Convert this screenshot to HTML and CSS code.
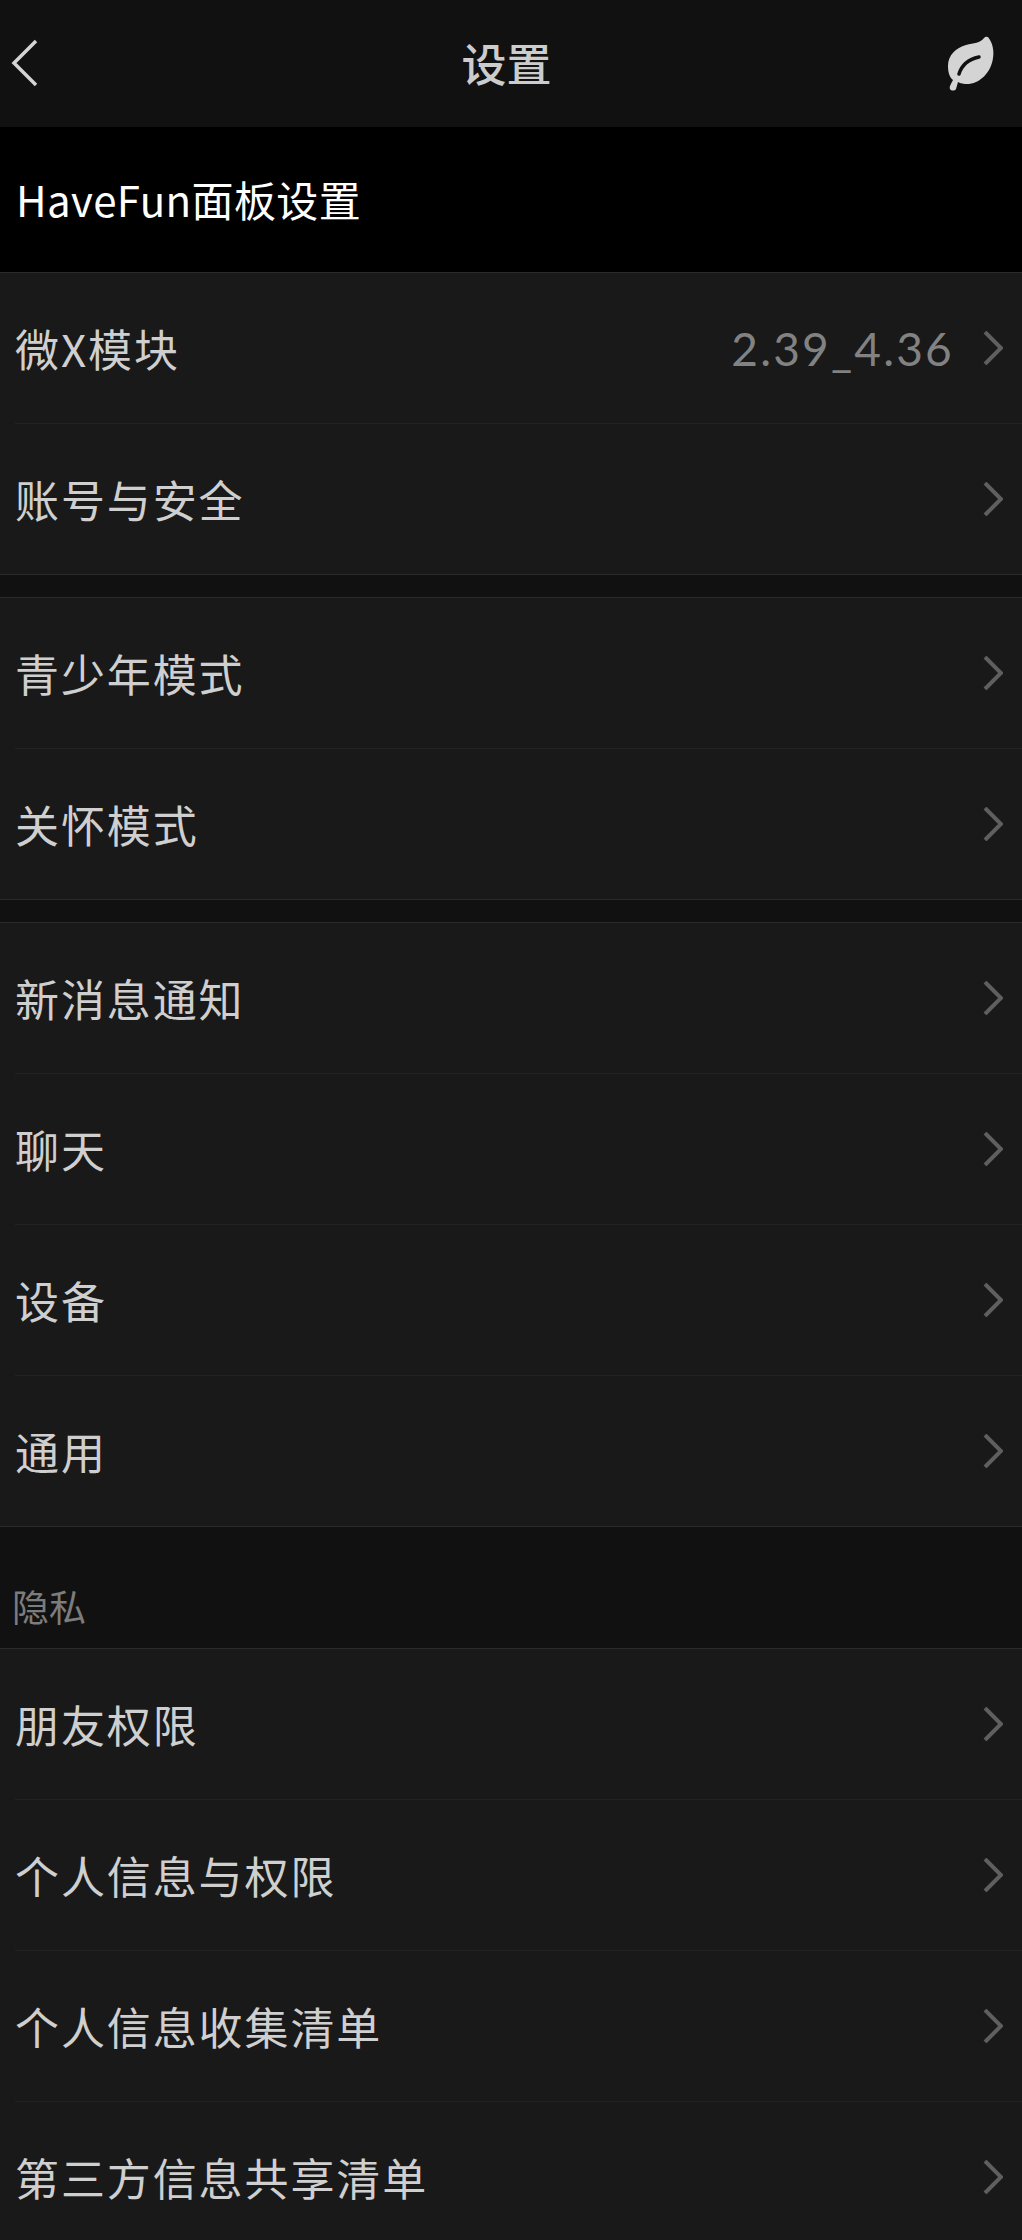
FILE: index.html
```html
<!DOCTYPE html>
<html lang="zh-CN">
<head>
    <meta charset="UTF-8">
    <title>设置</title>
    <link rel="stylesheet" href="styles.css">
</head>
<body>
    <!-- Top bar -->
    <div class="nav-bar">
        <svg class="nav-back" width="28" height="48" viewBox="0 0 28 48"><path d="M25 2 L3 24 L25 46" fill="none" stroke="#d4d4d4" stroke-width="3.5"/></svg>
        <div class="nav-title">设置</div>
        <svg class="nav-leaf" width="48" height="56" viewBox="0 0 48 56">
            <path d="M38 3 C41 0 43 3 44 5 C47 10 48 17 47 23 C45 38 33 50 19 49 C17 49 15 48 14 48 L12 47 L10 54 C9 56 5 56 4 54 C3 52 5 49 7 45 C3 42 2 36 2 31 C2 20 10 13 20 10 C28 8 34 8 38 3 Z" fill="#d4d4d4"/>
            <path d="M13 39 C16 29 24 24 33 22" fill="none" stroke="#111" stroke-width="3.5" stroke-linecap="round"/>
        </svg>
    </div>

    <div class="banner">HaveFun面板设置</div>

    <div class="group">
        <div class="row">
            <span class="row-label">微X模块</span>
            <span class="row-value">2.39_4.36</span>
            <svg class="chevron" width="20" height="34" viewBox="0 0 20 34"><path d="M2 1 L18 17 L2 33" fill="none" stroke="#5f5f5f" stroke-width="4"/></svg>
        </div>
        <div class="row">
            <span class="row-label">账号与安全</span>
            <svg class="chevron" width="20" height="34" viewBox="0 0 20 34"><path d="M2 1 L18 17 L2 33" fill="none" stroke="#5f5f5f" stroke-width="4"/></svg>
        </div>
    </div>

    <div class="group spaced">
        <div class="row">
            <span class="row-label">青少年模式</span>
            <svg class="chevron" width="20" height="34" viewBox="0 0 20 34"><path d="M2 1 L18 17 L2 33" fill="none" stroke="#5f5f5f" stroke-width="4"/></svg>
        </div>
        <div class="row">
            <span class="row-label">关怀模式</span>
            <svg class="chevron" width="20" height="34" viewBox="0 0 20 34"><path d="M2 1 L18 17 L2 33" fill="none" stroke="#5f5f5f" stroke-width="4"/></svg>
        </div>
    </div>

    <div class="group spaced">
        <div class="row">
            <span class="row-label">新消息通知</span>
            <svg class="chevron" width="20" height="34" viewBox="0 0 20 34"><path d="M2 1 L18 17 L2 33" fill="none" stroke="#5f5f5f" stroke-width="4"/></svg>
        </div>
        <div class="row">
            <span class="row-label">聊天</span>
            <svg class="chevron" width="20" height="34" viewBox="0 0 20 34"><path d="M2 1 L18 17 L2 33" fill="none" stroke="#5f5f5f" stroke-width="4"/></svg>
        </div>
        <div class="row">
            <span class="row-label">设备</span>
            <svg class="chevron" width="20" height="34" viewBox="0 0 20 34"><path d="M2 1 L18 17 L2 33" fill="none" stroke="#5f5f5f" stroke-width="4"/></svg>
        </div>
        <div class="row">
            <span class="row-label">通用</span>
            <svg class="chevron" width="20" height="34" viewBox="0 0 20 34"><path d="M2 1 L18 17 L2 33" fill="none" stroke="#5f5f5f" stroke-width="4"/></svg>
        </div>
    </div>

    <div class="section-title">隐私</div>

    <div class="group">
        <div class="row">
            <span class="row-label">朋友权限</span>
            <svg class="chevron" width="20" height="34" viewBox="0 0 20 34"><path d="M2 1 L18 17 L2 33" fill="none" stroke="#5f5f5f" stroke-width="4"/></svg>
        </div>
        <div class="row">
            <span class="row-label">个人信息与权限</span>
            <svg class="chevron" width="20" height="34" viewBox="0 0 20 34"><path d="M2 1 L18 17 L2 33" fill="none" stroke="#5f5f5f" stroke-width="4"/></svg>
        </div>
        <div class="row">
            <span class="row-label">个人信息收集清单</span>
            <svg class="chevron" width="20" height="34" viewBox="0 0 20 34"><path d="M2 1 L18 17 L2 33" fill="none" stroke="#5f5f5f" stroke-width="4"/></svg>
        </div>
        <div class="row">
            <span class="row-label">第三方信息共享清单</span>
            <svg class="chevron" width="20" height="34" viewBox="0 0 20 34"><path d="M2 1 L18 17 L2 33" fill="none" stroke="#5f5f5f" stroke-width="4"/></svg>
        </div>
    </div>
</body>
</html>
```

FILE: styles.css
```css
body {
    margin: 0;
    height: 2240px;
    overflow: hidden;
    background-color: #111111;
    font-family: "Noto Sans CJK SC", "Noto Sans", sans-serif;
}

/* Top bar */
.nav-bar {
    display: flex;
    align-items: center;
    justify-content: space-between;
    height: 127px;
    padding: 0 28px 2px 11px;
    box-sizing: border-box;
    background-color: #111111;
}

.nav-title {
    font-size: 45px;
    font-weight: 500;
    color: #cccccc;
    margin-left: 28px;
}

.nav-back {
    display: block;
}

.nav-leaf {
    display: block;
}

/* Black banner */
.banner {
    display: flex;
    align-items: center;
    height: 145px;
    padding: 0 0 2px 16px;
    box-sizing: border-box;
    background-color: #000000;
    color: #ffffff;
    font-size: 42px;
    letter-spacing: 0.4px;
}

/* Setting groups */
.group {
    background-color: #191919;
    border-top: 1px solid #2a2a2a;
    border-bottom: 1px solid #2a2a2a;
}

.group.spaced {
    margin-top: 22px;
}

.row {
    display: flex;
    align-items: center;
    height: 151px;
    margin-left: 15px;
    padding-right: 19px;
    box-sizing: border-box;
    border-bottom: 1px solid #222222;
}

.row:last-child {
    border-bottom: none;
    height: 150px;
}

.row-label {
    flex: 1;
    font-size: 44px;
    letter-spacing: 1.9px;
    color: #cfcfcf;
}

.row-value {
    margin-right: 29px;
    font-family: "Lato", sans-serif;
    font-size: 46px;
    letter-spacing: 2.2px;
    color: #828282;
}

.chevron {
    display: block;
}

/* Section heading */
.section-title {
    display: flex;
    align-items: flex-end;
    height: 121px;
    padding: 0 0 15px 12px;
    box-sizing: border-box;
    font-size: 37px;
    color: #7c7c7c;
}
```
